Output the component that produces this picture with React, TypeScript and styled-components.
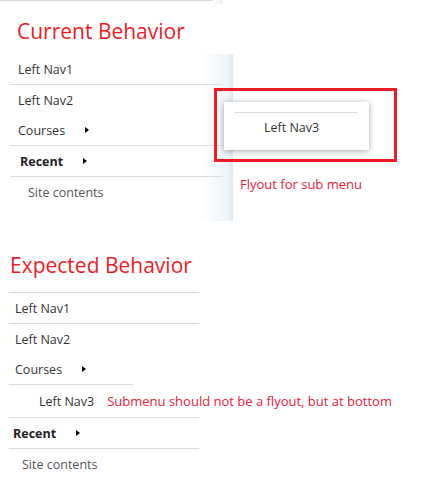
import styled, {createGlobalStyle} from "styled-components";

const GlobalStyle = createGlobalStyle`
  body {
    margin: 0;
    background: #fff;
    font-family: "Open Sans", "Noto Sans", sans-serif;
    color: #333;
  }
`

const Page = styled.div`
  width: 445px;
  height: 493px;
  overflow: hidden;
`

const TopBar = styled.div`
  display: flex;
  height: 4px;
`
const TopLine = styled.div`
  width: 213px;
  height: 1px;
  background: #d6d6d6;
`
const TopFade = styled.div`
  width: 10px;
  background: linear-gradient(to right, #fff, #e8f0f6);
`

const Heading = styled.h2<{ $indent: number; $top?: number }>`
  margin: ${p => p.$top ?? 0}px 0 0;
  padding-left: ${p => p.$indent}px;
  font-size: 21px;
  font-weight: 400;
  line-height: 28px;
  color: #ed1c24;
`

const CurrentPanel = styled.div`
  position: relative;
  width: 233px;
  height: 167px;
  margin-top: 9px;
  padding-left: 10px;
  box-sizing: border-box;
  background: linear-gradient(to right, #fff 199px, #edf3f8 229px, #e3ecf3 230px, #e3ecf3 233px);
`

const NavList = styled.ul<{ $width: number; $topLine?: boolean }>`
  list-style: none;
  margin: 0;
  padding: 0;
  width: ${p => p.$width}px;
  border-top: ${p => (p.$topLine ? "1px solid #dcdcdc" : "none")};
`

const NavItem = styled.li<{ $indent: number; $height?: number; $line?: "full" | "short" }>`
  display: flex;
  align-items: center;
  height: ${p => p.$height ?? 30}px;
  padding-left: ${p => p.$indent}px;
  font-size: 12.5px;
  white-space: nowrap;
  position: relative;

  &:after {
    content: "";
    display: ${p => (p.$line ? "block" : "none")};
    position: absolute;
    left: 0;
    bottom: -1px;
    height: 1px;
    width: ${p => (p.$line === "short" ? "124px" : "100%")};
    background: #dcdcdc;
  }
`

const Spacer = styled.li`
  height: 1px;
`

const Label = styled.span<{ $bold?: boolean; $muted?: boolean }>`
  font-weight: ${p => (p.$bold ? 700 : 400)};
  color: ${p => (p.$muted ? "#555" : p.$bold ? "#222" : "#333")};
`

const Arrow = styled.span`
  width: 0;
  height: 0;
  margin-left: 20px;
  border-top: 3.5px solid transparent;
  border-bottom: 3.5px solid transparent;
  border-left: 4px solid #000;
`

const Flyout = styled.div`
  position: absolute;
  left: 214px;
  top: 34px;
  display: flex;
  flex-direction: column;
`

const RedFrame = styled.div`
  width: 183px;
  height: 74px;
  box-sizing: border-box;
  border: 3px solid #ed1c24;
  padding: 11px 0 0 7px;
`

const SubCard = styled.div`
  width: 145px;
  height: 48px;
  box-sizing: border-box;
  background: #fff;
  box-shadow: 0 1px 6px rgba(0, 0, 0, 0.35);
  padding: 10px 11px 0 10px;
`

const SubLine = styled.div`
  height: 1px;
  background: #dcdcdc;
`

const SubLabel = styled.div`
  padding-left: 30px;
  margin-top: 6px;
  font-size: 12.5px;
  line-height: 18px;
`

const Note = styled.span<{ $gap?: number }>`
  margin-left: ${p => p.$gap ?? 0}px;
  font-size: 13px;
  line-height: 18px;
  color: #e8203a;
  white-space: nowrap;
`

const FlyoutNote = styled(Note)`
  margin-top: 13px;
  padding-left: 26px;
`

const ExpectedSection = styled.div`
  margin-top: 30px;
`

const ExpectedList = styled.div`
  margin-top: 13px;
  padding-left: 9px;
`

export default function App() {
    return (
        <Page>
            <GlobalStyle/>
            <TopBar>
                <TopLine/>
                <TopFade/>
            </TopBar>
            <Heading $indent={17} $top={13}>Current Behavior</Heading>
            <CurrentPanel>
                <NavList $width={213}>
                    <NavItem $indent={8} $line="full"><Label>Left Nav1</Label></NavItem>
                    <Spacer/>
                    <NavItem $indent={8}><Label>Left Nav2</Label></NavItem>
                    <NavItem $indent={8} $line="full"><Label>Courses</Label><Arrow/></NavItem>
                    <Spacer/>
                    <NavItem $indent={10} $line="full"><Label $bold>Recent</Label><Arrow/></NavItem>
                    <Spacer/>
                    <NavItem $indent={18}><Label $muted>Site contents</Label></NavItem>
                </NavList>
                <Flyout>
                    <RedFrame>
                        <SubCard>
                            <SubLine/>
                            <SubLabel>Left Nav3</SubLabel>
                        </SubCard>
                    </RedFrame>
                    <FlyoutNote>Flyout for sub menu</FlyoutNote>
                </Flyout>
            </CurrentPanel>
            <ExpectedSection>
                <Heading $indent={10}>Expected Behavior</Heading>
                <ExpectedList>
                    <NavList $width={190} $topLine>
                        <NavItem $indent={6} $line="full"><Label>Left Nav1</Label></NavItem>
                        <Spacer/>
                        <NavItem $indent={6}><Label>Left Nav2</Label></NavItem>
                        <NavItem $indent={6} $line="short"><Label>Courses</Label><Arrow/></NavItem>
                        <Spacer/>
                        <NavItem $indent={30} $height={32} $line="full">
                            <Label>Left Nav3</Label>
                            <Note $gap={13}>Submenu should not be a flyout, but at bottom</Note>
                        </NavItem>
                        <Spacer/>
                        <NavItem $indent={4} $line="full"><Label $bold>Recent</Label><Arrow/></NavItem>
                        <Spacer/>
                        <NavItem $indent={13}><Label $muted>Site contents</Label></NavItem>
                    </NavList>
                </ExpectedList>
            </ExpectedSection>
        </Page>
    );
}
